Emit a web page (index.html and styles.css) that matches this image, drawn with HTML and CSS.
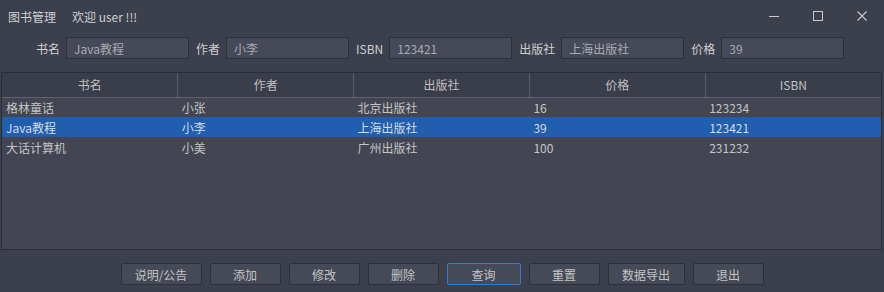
FILE: index.html
```html
<!DOCTYPE html>
<html lang="zh-CN">
<head>
  <meta charset="UTF-8">
  <title>图书管理</title>
  <link rel="stylesheet" href="styles.css">
</head>
<body>
  <div class="titlebar">
    <span class="title">图书管理</span>
    <span class="welcome">欢迎 user !!!</span>
    <div class="win-controls">
      <svg width="12" height="12" viewBox="0 0 12 12"><line x1="1" y1="6.5" x2="11" y2="6.5" stroke="#c8c8c8" stroke-width="1"/></svg>
      <svg width="12" height="12" viewBox="0 0 12 12"><rect x="1.5" y="1.5" width="9" height="9" fill="none" stroke="#c8c8c8" stroke-width="1"/></svg>
      <svg width="12" height="12" viewBox="0 0 12 12"><path d="M1.5 1.5 L10.5 10.5 M10.5 1.5 L1.5 10.5" stroke="#c8c8c8" stroke-width="1.1"/></svg>
    </div>
  </div>

  <div class="search">
    <label>书名</label><input type="text" value="Java教程">
    <label>作者</label><input type="text" value="小李">
    <label>ISBN</label><input type="text" value="123421">
    <label>出版社</label><input type="text" value="上海出版社">
    <label>价格</label><input type="text" value="39">
  </div>

  <div class="table-wrap">
    <table class="books">
      <thead>
        <tr><th>书名</th><th>作者</th><th>出版社</th><th>价格</th><th>ISBN</th></tr>
      </thead>
      <tbody>
        <tr><td>格林童话</td><td>小张</td><td>北京出版社</td><td>16</td><td>123234</td></tr>
        <tr class="selected"><td>Java教程</td><td>小李</td><td>上海出版社</td><td>39</td><td>123421</td></tr>
        <tr><td>大话计算机</td><td>小美</td><td>广州出版社</td><td>100</td><td>231232</td></tr>
      </tbody>
    </table>
  </div>

  <div class="actions">
    <button class="btn w81">说明/公告</button>
    <button class="btn">添加</button>
    <button class="btn">修改</button>
    <button class="btn">删除</button>
    <button class="btn w74 focused">查询</button>
    <button class="btn">重置</button>
    <button class="btn w77">数据导出</button>
    <button class="btn">退出</button>
  </div>
</body>
</html>
```

FILE: styles.css
```css
* { margin: 0; padding: 0; box-sizing: border-box; }
body {
  font-family: "Noto Sans CJK SC", "Noto Sans", sans-serif;
  font-size: 12px;
  background: #3c3f4c;
  color: #c4c4c4;
  width: 884px;
  height: 292px;
  overflow: hidden;
}
.titlebar {
  height: 33px;
  display: flex;
  align-items: center;
  padding-left: 8px;
  color: #d0d0d0;
}
.welcome { margin-left: 16px; }
.win-controls {
  margin-left: auto;
  display: flex;
  gap: 32px;
  padding-right: 16px;
  margin-top: -2px;
}
.win-controls svg { display: block; }
.search {
  display: flex;
  align-items: center;
  padding-left: 36px;
  height: 22px;
  margin-top: 4px;
}
.search label {
  margin-right: 6px;
  font-size: 12px;
  color: #d0d0d0;
}
.search input {
  width: 123px;
  height: 22px;
  margin-right: 7px;
  background: #464957;
  border: 1px solid #2e303b;
  color: #a8abb2;
  font-family: "Noto Sans CJK SC", "Noto Sans", sans-serif;
  font-size: 12px;
  padding: 0 7px;
  outline: none;
}
.table-wrap {
  margin: 13px 2px 0 1px;
  height: 178px;
  border: 1px solid #2b2d37;
  background: #434652;
}
.books {
  width: 100%;
  border-collapse: collapse;
  table-layout: fixed;
}
.books th {
  height: 24px;
  font-weight: normal;
  background: #3a3d4a;
  border-right: 1px solid #5a5d68;
  border-bottom: 1px solid #5f626c;
  color: #c0c0c0;
}
.books th:last-child { border-right: none; }
.books td {
  height: 20px;
  padding-left: 4px;
  color: #c4c4c4;
  white-space: nowrap;
}
.books tr.selected td { background: #1f5fae; color: #d6dbe4; }
.actions {
  display: flex;
  justify-content: center;
  gap: 8px;
  margin-top: 13px;
}
.btn {
  width: 71px;
  height: 22px;
  background: #464a57;
  border: 1px solid #2d2f3a;
  border-radius: 2px;
  color: #c4c4c4;
  font-family: "Noto Sans CJK SC", "Noto Sans", sans-serif;
  font-size: 12px;
}
.btn.w81 { width: 81px; }
.btn.w74 { width: 74px; }
.btn.w77 { width: 77px; }
.btn.focused { border: 1px solid #2f7bd8; }
```
